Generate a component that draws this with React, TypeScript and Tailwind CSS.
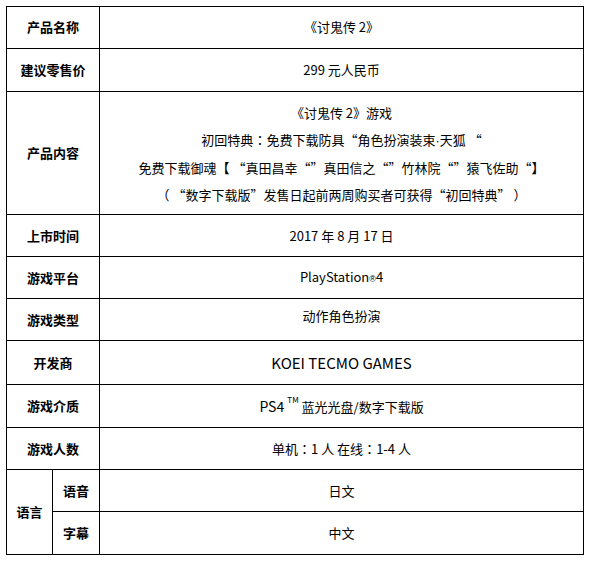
import React from "react";

const cell = "border border-black text-center align-middle p-0";
const label = `${cell} font-bold text-[13px] text-black`;
const value = `${cell} text-[13px] text-black`;

// centred full-width colon, as in the original rendering
const Colon = () => (
  <span className="font-['Noto_Sans_CJK_TC',sans-serif]">：</span>
);

export default function App() {
  return (
    <div className="min-h-screen bg-white pt-[6px] pl-[6px] font-['Noto_Sans_CJK_SC','Noto_Sans',sans-serif]">
      <table className="table-fixed border-collapse w-[577px] leading-[20px]">
        <colgroup>
          <col className="w-[46px]" />
          <col className="w-[47px]" />
          <col className="w-[484px]" />
        </colgroup>
        <tbody>
          <tr className="h-[42px]">
            <td colSpan={2} className={`${label} pb-[2px]`}>产品名称</td>
            <td className={`${value} pb-[2px]`}>《讨鬼传 2》</td>
          </tr>
          <tr className="h-[43px]">
            <td colSpan={2} className={label}>建议零售价</td>
            <td className={value}>299 元人民币</td>
          </tr>
          <tr className="h-[123px]">
            <td colSpan={2} className={label}>产品内容</td>
            <td className={`${value} leading-[27px]`}>
              <div>《讨鬼传 2》游戏</div>
              <div>
                初回特典<Colon />免费下载防具“角色扮演装束
                <span className="font-['Liberation_Sans',sans-serif]">·</span>天狐 “
              </div>
              <div>免费下载御魂【 “真田昌幸“”真田信之“”竹林院“”猿飞佐助“】</div>
              <div>（ “数字下载版”发售日起前两周购买者可获得“初回特典” ）</div>
            </td>
          </tr>
          <tr className="h-[42px]">
            <td colSpan={2} className={label}>上市时间</td>
            <td className={value}>2017 年 8 月 17 日</td>
          </tr>
          <tr className="h-[42px]">
            <td colSpan={2} className={label}>游戏平台</td>
            <td className={value}>
              PlayStation<span className="text-[9px] font-['Liberation_Sans',sans-serif]">®</span>4
            </td>
          </tr>
          <tr className="h-[42px]">
            <td colSpan={2} className={label}>游戏类型</td>
            <td className={`${value} pb-[8px]`}>动作角色扮演</td>
          </tr>
          <tr className="h-[44px]">
            <td colSpan={2} className={label}>开发商</td>
            <td className={`${value} text-[15px]`}>KOEI TECMO GAMES</td>
          </tr>
          <tr className="h-[43px]">
            <td colSpan={2} className={label}>游戏介质</td>
            <td className={value}>
              <span className="text-[14px]">PS4 </span>
              <sup className="text-[8px] align-[5px]">TM</sup> 蓝光光盘/数字下载版
            </td>
          </tr>
          <tr className="h-[42px]">
            <td colSpan={2} className={label}>游戏人数</td>
            <td className={value}>
              单机<Colon />1 人 在线<Colon />1-4 人
            </td>
          </tr>
          <tr className="h-[42px]">
            <td rowSpan={2} className={label}>语言</td>
            <td className={label}>语音</td>
            <td className={value}>日文</td>
          </tr>
          <tr className="h-[43px]">
            <td className={label}>字幕</td>
            <td className={value}>中文</td>
          </tr>
        </tbody>
      </table>
    </div>
  );
}
